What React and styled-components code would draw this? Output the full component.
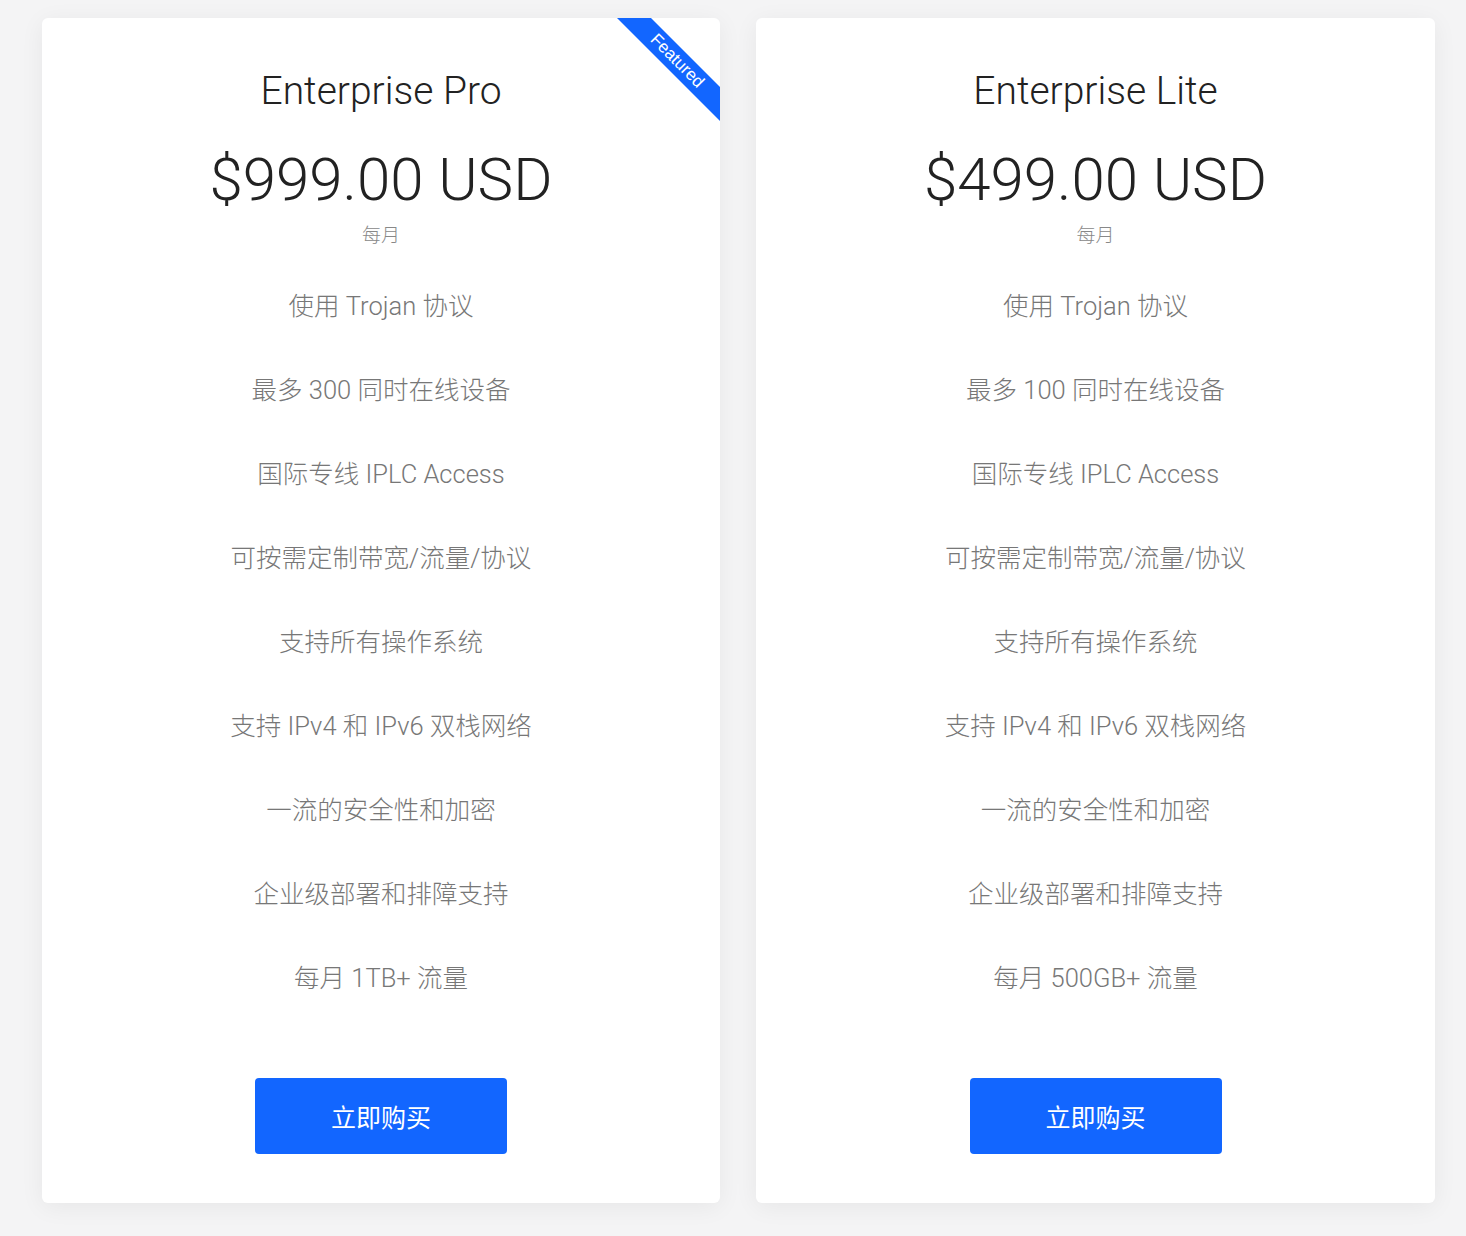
import styled, { createGlobalStyle } from "styled-components";

const plans = [
    {
        name: "Enterprise Pro",
        price: "$999.00 USD",
        featured: true,
        features: [
            "使用 Trojan 协议",
            "最多 300 同时在线设备",
            "国际专线 IPLC Access",
            "可按需定制带宽/流量/协议",
            "支持所有操作系统",
            "支持 IPv4 和 IPv6 双栈网络",
            "一流的安全性和加密",
            "企业级部署和排障支持",
            "每月 1TB+ 流量",
        ],
    },
    {
        name: "Enterprise Lite",
        price: "$499.00 USD",
        featured: false,
        features: [
            "使用 Trojan 协议",
            "最多 100 同时在线设备",
            "国际专线 IPLC Access",
            "可按需定制带宽/流量/协议",
            "支持所有操作系统",
            "支持 IPv4 和 IPv6 双栈网络",
            "一流的安全性和加密",
            "企业级部署和排障支持",
            "每月 500GB+ 流量",
        ],
    },
];

const App = () => {
    return (
        <>
            <GlobalStyle />
            <Page>
                {plans.map(plan => (
                    <Card key={plan.name}>
                        {plan.featured && <Ribbon>Featured</Ribbon>}
                        <Title>{plan.name}</Title>
                        <Price>{plan.price}</Price>
                        <Period>每月</Period>
                        <Features>
                            {plan.features.map(f => (
                                <Feature key={f}>{f}</Feature>
                            ))}
                        </Features>
                        <BuyButton>立即购买</BuyButton>
                    </Card>
                ))}
            </Page>
        </>
    )
}

const GlobalStyle = createGlobalStyle`
    body {
        margin: 0;
        background: #f4f4f5;
        font-family: Roboto, "Noto Sans CJK SC", sans-serif;
    }
`;

const Page = styled.div`
    display: grid;
    grid-template-columns: 678px 679px;
    gap: 36px;
    padding: 18px 31px 33px 42px;
`;

const Card = styled.div`
    position: relative;
    overflow: hidden;
    display: flex;
    flex-direction: column;
    align-items: center;
    height: 1185px;
    box-sizing: border-box;
    padding-top: 48px;
    background: #fff;
    border-radius: 6px;
    box-shadow: 0 4px 24px rgba(0, 0, 0, 0.06);
`;

const Ribbon = styled.div`
    position: absolute;
    top: 31px;
    right: -37px;
    width: 160px;
    height: 24px;
    line-height: 24px;
    transform: rotate(45deg);
    background: #1266ff;
    color: #fff;
    font-family: "Liberation Sans", Arial, sans-serif;
    font-size: 17px;
    text-align: center;
`;

const Title = styled.h2`
    margin: 0;
    font-size: 39px;
    font-weight: 300;
    line-height: 50px;
    color: #222;
`;

const Price = styled.div`
    margin-top: 28px;
    font-size: 60px;
    font-weight: 300;
    line-height: 72px;
    color: #222;
`;

const Period = styled.div`
    margin-top: 9px;
    font-size: 19px;
    font-weight: 300;
    line-height: 22px;
    color: #888;
`;

const Features = styled.ul`
    list-style: none;
    margin: 41px 0 0;
    padding: 0;
    display: flex;
    flex-direction: column;
    align-items: center;
    gap: 48px;
`;

const Feature = styled.li`
    font-size: 25.5px;
    font-weight: 300;
    line-height: 36px;
    color: #777;
`;

const BuyButton = styled.button`
    margin-top: 82px;
    width: 252px;
    height: 76px;
    border: none;
    border-radius: 4px;
    background: #1266ff;
    color: #fff;
    font-family: Roboto, "Noto Sans CJK SC", sans-serif;
    font-size: 25px;
    font-weight: 400;
    cursor: pointer;
`;

export default App;
